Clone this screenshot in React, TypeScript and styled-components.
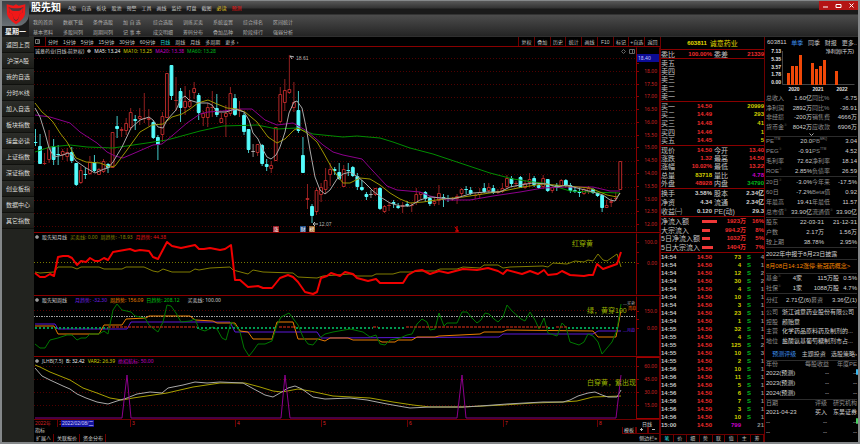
import React from 'react';
import styled, { createGlobalStyle } from 'styled-components';

const RED = '#f02c2c';
const LINE = '#6e0000';
const CYAN = '#54fcfc';
const YELLOW = '#d0cc00';
const MAGENTA = '#c800c8';
const GREEN = '#00b81c';
const TEXT = '#d0d0d0';

const Global = createGlobalStyle`
  * { box-sizing: border-box; }
  body { margin: 0; background: #000; }
  body, button, table {
    font-family: "Liberation Sans", "Noto Sans CJK SC", sans-serif;
    color: ${TEXT};
  }
  button { appearance: none; border: 0; margin: 0; padding: 0; background: none; cursor: pointer; white-space: nowrap; }
`;

/* ---------- window frame ---------- */

const Window = styled.div`
  min-height: 100vh;
  display: flex;
  flex-direction: column;
  background: #000;
  border: solid #85888a;
  border-width: 1px 2px 2px;
  font-size: 5px;
  line-height: 7px;
`;

const Header = styled.header`
  display: grid;
  grid-template-columns: 27px minmax(0, 1fr);
  height: 36px;
  background: linear-gradient(#585858 0, #333 7px, #1a1a1a 8px, #1a1a1a 13px, #4c4c4c 14px, #242424 35px, #3a3a3a 36px);
`;

const Brand = styled.div`
  display: flex;
  flex-direction: column;
  align-items: center;
  justify-content: space-between;
  background: #1c1c1c;
`;

const Emblem = styled.div`
  width: 100%;
  height: 25px;
  display: grid;
  place-items: center;
  border-bottom-right-radius: 12px;
  background: linear-gradient(#3c4044, #6a7075);
`;

const Weekday = styled.strong`
  font-size: 7px;
  line-height: 10px;
  color: #f0f0f0;
`;

const HeaderMain = styled.div`
  display: flex;
  flex-direction: column;
  min-width: 0;
`;

const TitleBar = styled.div`
  display: flex;
  align-items: center;
  height: 13px;
`;

const AppName = styled.h1`
  margin: 0 7px 0 2px;
  font-size: 10px;
  line-height: 12px;
  color: #fff;
`;

const TopMenu = styled.nav`
  display: flex;
  flex: 1;
  gap: 5px;
`;

const MenuButton = styled.button<{ $color?: string }>`
  font-size: 5px;
  line-height: 8px;
  color: ${p => p.$color ?? '#c8c8c8'};
`;

const WindowButtons = styled.div`
  display: flex;
  align-self: flex-start;
  background: #b41414;
`;

const WindowButton = styled.button`
  width: 13px;
  height: 9px;
  display: grid;
  place-items: center;
`;

const CommandGrid = styled.nav`
  display: grid;
  grid-template-columns: repeat(9, 30px);
  padding: 3px 0 0 4px;
  button { text-align: left; line-height: 10px; color: #b0b0b0; }
`;

const Body = styled.div`
  flex: 1;
  display: grid;
  grid-template-columns: 32px minmax(0, 1fr) 105px 93px;
`;

const Sidebar = styled.nav`
  display: flex;
  flex-direction: column;
  background: #22231f;
`;

const SideButton = styled.button`
  height: 16px;
  font-size: 6px;
  color: #dcdcd8;
  background: linear-gradient(#2c2d29, #1c1d19);
  border-bottom: 1px solid #10110e;
`;

/* ---------- chart area ---------- */

const Center = styled.main`
  display: grid;
  grid-template-rows: 9px minmax(0, 186fr) minmax(0, 63fr) minmax(0, 61fr) minmax(0, 63fr) 8px 7px 8px;
  min-width: 0;
`;

const Toolbar = styled.div`
  display: flex;
  justify-content: space-between;
`;

const PeriodGroup = styled.div`
  display: flex;
  align-items: center;
  gap: 5px;
  padding-left: 1px;
`;

const Divider = styled.i`
  width: 1px;
  height: 9px;
  margin-right: -3px;
  background: ${LINE};
`;

const PeriodButton = styled.button<{ $active?: boolean }>`
  font-size: 5px;
  line-height: 8px;
  color: ${p => (p.$active ? '#28d8d8' : '#c4c4c4')};
`;

const ToolGroup = styled.div`
  display: grid;
  grid-template-columns: repeat(9, 1fr);
  width: 142px;
`;

const ToolButton = styled.button`
  border-left: 1px solid ${LINE};
  font-size: 5px;
  line-height: 8px;
  color: #c4c4c4;
`;

const Panel = styled.section`
  display: grid;
  grid-template-columns: minmax(0, 1fr) 24px;
  border-top: 1px solid #8a0000;
  min-height: 0;
`;

const Plot = styled.div`
  position: relative;
  overflow: hidden;
`;

const Canvas = styled.svg`
  position: absolute;
  inset: 0;
  width: 100%;
  height: 100%;
  * { vector-effect: non-scaling-stroke; }
`;

const Legend = styled.div`
  position: relative;
  display: flex;
  align-items: center;
  gap: 3px;
  padding-left: 1px;
  height: 8px;
  font-family: "Noto Sans", "Noto Sans CJK SC", sans-serif;
  white-space: nowrap;
`;

const Value = styled.span<{ $color?: string; $lead?: boolean }>`
  color: ${p => p.$color ?? TEXT};
  margin-left: ${p => (p.$lead ? 5 : 0)}px;
`;

const LegendTools = styled.div`
  display: flex;
  gap: 3px;
  margin-left: auto;
  padding-right: 1px;
`;

const Dot = styled.i`
  width: 4px;
  height: 4px;
  border-radius: 50%;
  background: #aaa;
  border: 1px solid #777;
`;

const Note = styled.span<{ $x: number; $y: number; $color?: string; $size?: number }>`
  position: absolute;
  left: ${p => p.$x}%;
  top: ${p => p.$y}%;
  color: ${p => p.$color ?? '#b4b4b4'};
  font-size: ${p => p.$size ?? 5}px;
  line-height: ${p => (p.$size === 4 ? 4 : 8)}px;
  white-space: nowrap;
`;

const Badge = styled.span<{ $x: number; $bg: string }>`
  position: absolute;
  left: ${p => p.$x}%;
  bottom: 0;
  width: 6px;
  height: 6px;
  background: ${p => p.$bg};
  color: #fff;
  font-size: 5px;
  line-height: 6px;
  text-align: center;
`;

const Axis = styled.div<{ $top: number; $boxed?: boolean }>`
  display: flex;
  flex-direction: column;
  padding-top: ${p => p.$top}px;
  border: 1px solid ${p => (p.$boxed ? '#a00000' : 'transparent')};
  border-left-color: #8a0000;
  border-right-color: ${LINE};
  font-family: "Noto Sans", sans-serif;
  color: #d02424;
`;

const AxisRow = styled.div<{ $height?: number }>`
  flex: ${p => (p.$height ? `0 0 ${p.$height}px` : '1 1 0')};
  display: flex;
  align-items: center;
  justify-content: space-between;
  padding-right: 2px;
  &::before { content: ''; width: 2px; height: 1px; background: #8a0000; }
`;

const Cursor = styled.div`
  height: 8px;
  padding-left: 1px;
  font-family: "Noto Sans", sans-serif;
  line-height: 8px;
  color: #c8c8ff;
  background: #0c0c96;
`;

const TimeRow = styled.div`
  display: grid;
  grid-template-columns: minmax(0, 1fr) 24px;
  border-top: 1px solid ${LINE};
`;

const TimeTrack = styled.div`
  position: relative;
  padding-left: 1px;
`;

const Month = styled.span<{ $x: number }>`
  position: absolute;
  left: ${p => p.$x}%;
  padding-left: 1px;
  border-left: 1px solid ${LINE};
  line-height: 7px;
  color: #d82424;
`;

const DateTag = styled(Month)`
  border: 0;
  padding: 0 1px;
  color: #d0d0ff;
  background: #1414a0;
`;

const Cell = styled.button<{ $boxed?: boolean; $width?: number }>`
  font-size: 5px;
  line-height: 6px;
  color: ${TEXT};
  padding: 0 2px 0 1px;
  width: ${p => (p.$width ? `${p.$width}px` : 'auto')};
  border-right: 1px solid ${LINE};
  border-left: ${p => (p.$boxed ? `1px solid ${LINE}` : '0')};
  border-bottom: ${p => (p.$boxed ? `1px solid ${LINE}` : '0')};
`;

const Strip = styled.div`
  display: flex;
  gap: 2px;
  padding-left: 1px;
`;

const Push = styled.div`
  display: flex;
  margin-left: auto;
`;

/* ---------- quote panel ---------- */

const Quote = styled.aside`
  display: flex;
  flex-direction: column;
  border-left: 1px solid ${LINE};
  border-right: 1px solid ${LINE};
`;

const StockTitle = styled.h2`
  display: flex;
  justify-content: center;
  align-items: center;
  gap: 3px;
  margin: 0;
  height: 12px;
  font-size: 7px;
  font-weight: normal;
  color: #e0dc00;
  b { font-size: 6px; }
`;

const QuoteTable = styled.table<{ $height: number }>`
  width: 100%;
  height: ${p => p.$height}px;
  table-layout: fixed;
  border-collapse: separate;
  border-spacing: 0;
  border-top: 1px solid #8a0000;
  font-size: 6px;
  line-height: 7px;
  white-space: nowrap;
  td, th { padding: 0; vertical-align: middle; }
`;

const Label = styled.th<{ $size?: number }>`
  text-align: left;
  font-weight: normal;
  font-size: ${p => p.$size ?? 7}px;
  color: #c4c4c4;
`;

const Num = styled.td<{ $color?: string }>`
  text-align: right;
  font-weight: bold;
  color: ${p => p.$color ?? TEXT};
`;

const Flow = styled.div<{ $width: number }>`
  width: ${p => p.$width}px;
  height: 3px;
  background: #f03838;
`;

const QuoteTabs = styled.div`
  display: grid;
  grid-template-columns: repeat(8, 1fr);
  margin-top: auto;
  height: 8px;
  border-top: 1px solid ${LINE};
`;

const QuoteTab = styled.button<{ $active?: boolean }>`
  font-size: 5px;
  line-height: 7px;
  border-right: 1px solid ${LINE};
  color: ${p => (p.$active ? '#28d8d8' : '#c4c4c4')};
`;

/* ---------- company panel ---------- */

const Info = styled.aside`
  position: relative;
  display: flex;
  flex-direction: column;
  min-width: 0;
  overflow: hidden;
  padding: 0 1px;
  font-size: 6px;
`;

const InfoTabs = styled.div<{ $height: number }>`
  display: flex;
  align-items: center;
  justify-content: space-between;
  height: ${p => p.$height}px;
  padding-left: 1px;
  white-space: nowrap;
`;

const InfoTab = styled.button<{ $active?: boolean }>`
  font-size: 6px;
  color: ${p => (p.$active ? '#3c8ce8' : '#c0c0c0')};
`;

const Profit = styled.figure`
  display: grid;
  grid-template-columns: 16px minmax(0, 1fr);
  grid-template-rows: 38px 8px;
  margin: 0;
  font-size: 5px;
  font-weight: bold;
  color: #e0e0e0;
`;

const ProfitScale = styled.div`
  display: flex;
  flex-direction: column;
  justify-content: space-between;
  text-align: right;
  padding-right: 1px;
`;

const ProfitPlot = styled.div`
  position: relative;
`;

const ProfitTitle = styled.figcaption`
  position: absolute;
  top: 0;
  right: 3px;
  font-weight: normal;
`;

const Years = styled.div`
  grid-column: 2;
  display: grid;
  grid-template-columns: repeat(3, 24px);
  text-align: center;
`;

const InfoTable = styled.table<{ $height: number; $line?: boolean }>`
  width: 100%;
  height: ${p => p.$height}px;
  table-layout: fixed;
  border-collapse: separate;
  border-spacing: 0;
  border-top: ${p => (p.$line === false ? '0' : '1px solid #2c2c2c')};
  font-size: 6px;
  line-height: 7px;
  white-space: nowrap;
  td, th { padding: 0; vertical-align: middle; }
`;

const Dim = styled.th<{ $right?: boolean }>`
  font-weight: normal;
  text-align: ${p => (p.$right ? 'right' : 'left')};
  color: #8c8c8c;
  sup { font-size: 3px; line-height: 3px; }
`;

const Fact = styled.td<{ $left?: boolean }>`
  text-align: ${p => (p.$left ? 'left' : 'right')};
  color: #d0d0d0;
`;

const Expand = styled.button`
  height: 4px;
  display: grid;
  place-items: center;
`;

const News = styled.a<{ $alert?: boolean; $height: number }>`
  display: block;
  height: ${p => p.$height}px;
  border-top: 1px solid #2c2c2c;
  line-height: 12px;
  white-space: nowrap;
  text-decoration: none;
  color: ${p => (p.$alert ? '#f88800' : '#d0d0d0')};
`;

const ScrollMark = styled.i<{ $top: number; $color: string }>`
  position: absolute;
  right: 0;
  top: ${p => p.$top}%;
  width: 2px;
  height: 6px;
  border-radius: 1px;
  background: ${p => p.$color};
`;

/* ---------- data ---------- */

type Kind = 'u' | 'd' | 'f';
type Candle = [number, number, number, number, Kind];

// high, body top, body bottom, low (plot units), direction
const candles: Candle[] = [
  [129, 142, 143, 146, 'd'], [134, 146, 164, 164, 'd'], [153, 163, 164, 165, 'u'], [130, 147, 160, 163, 'u'],
  [139, 146, 160, 165, 'd'], [145, 154, 155, 165, 'd'], [149, 151, 155, 160, 'u'], [148, 152, 157, 161, 'u'],
  [147, 152, 161, 163, 'd'], [163, 163, 185, 186, 'd'], [166, 170, 183, 184, 'u'], [168, 174, 175, 179, 'd'],
  [156, 162, 174, 175, 'u'], [155, 162, 171, 172, 'd'], [168, 169, 175, 175, 'u'], [159, 161, 172, 173, 'u'],
  [163, 164, 168, 173, 'd'], [132, 132, 168, 168, 'u'], [116, 126, 129, 138, 'd'], [127, 129, 131, 137, 'u'],
  [118, 123, 131, 135, 'u'], [108, 112, 128, 130, 'u'], [115, 119, 121, 130, 'd'], [108, 116, 119, 125, 'u'],
  [93, 118, 119, 123, 'u'], [109, 118, 120, 126, 'u'], [120, 122, 138, 139, 'd'], [135, 137, 145, 160, 'd'],
  [112, 116, 135, 142, 'u'], [73, 73, 118, 118, 'u'], [65, 65, 96, 100, 'd'], [77, 100, 101, 111, 'u'],
  [88, 91, 108, 122, 'd'], [86, 101, 108, 115, 'u'], [90, 101, 107, 108, 'u'], [82, 88, 93, 99, 'u'],
  [93, 95, 113, 120, 'd'], [111, 113, 118, 126, 'u'], [103, 107, 118, 127, 'u'], [91, 107, 108, 117, 'u'],
  [94, 108, 115, 117, 'd'], [113, 118, 123, 123, 'u'], [105, 113, 117, 137, 'u'], [87, 93, 114, 116, 'u'],
  [94, 98, 115, 116, 'd'], [101, 109, 111, 117, 'u'], [113, 115, 132, 135, 'd'], [129, 129, 150, 153, 'd'],
  [144, 151, 152, 157, 'f'], [144, 144, 153, 156, 'u'], [144, 145, 164, 166, 'd'], [159, 164, 167, 171, 'd'],
  [161, 165, 169, 173, 'u'], [127, 127, 161, 161, 'u'], [87, 94, 122, 123, 'u'], [79, 90, 103, 111, 'u'],
  [55, 89, 93, 94, 'u'], [82, 102, 108, 112, 'u'], [91, 110, 131, 133, 'd'], [137, 155, 173, 173, 'd'],
  [184, 198, 200, 209, 'u'], [204, 206, 216, 223, 'd'], [188, 190, 212, 215, 'u'], [183, 187, 195, 202, 'u'],
  [168, 180, 190, 194, 'u'], [163, 169, 175, 186, 'u'], [167, 169, 171, 175, 'd'], [163, 172, 179, 180, 'd'],
  [165, 169, 187, 187, 'u'], [163, 170, 171, 176, 'd'], [166, 167, 176, 177, 'd'], [173, 176, 187, 190, 'd'],
  [180, 187, 190, 191, 'd'], [192, 194, 197, 200, 'd'], [190, 194, 195, 198, 'f'], [188, 188, 195, 196, 'u'],
  [187, 188, 209, 210, 'd'], [205, 206, 212, 213, 'u'], [202, 205, 206, 211, 'u'], [200, 202, 204, 208, 'd'],
  [203, 206, 208, 209, 'd'], [202, 205, 207, 213, 'u'], [201, 204, 206, 207, 'd'], [203, 205, 206, 212, 'u'],
  [188, 194, 203, 205, 'u'], [192, 192, 195, 199, 'u'], [191, 192, 199, 202, 'd'], [197, 198, 204, 206, 'd'],
  [197, 201, 204, 206, 'u'], [185, 193, 201, 205, 'u'], [194, 197, 200, 207, 'd'], [195, 198, 199, 202, 'd'],
  [197, 198, 199, 201, 'u'], [194, 196, 199, 204, 'u'], [188, 189, 194, 197, 'u'], [186, 189, 190, 194, 'd'],
  [187, 190, 194, 195, 'd'], [193, 195, 196, 199, 'u'], [188, 192, 195, 198, 'u'], [183, 188, 192, 193, 'd'],
  [183, 187, 191, 193, 'u'], [185, 188, 193, 194, 'd'], [189, 191, 193, 194, 'u'], [183, 188, 192, 193, 'u'],
  [175, 178, 187, 189, 'u'], [176, 178, 184, 187, 'd'], [181, 183, 184, 187, 'u'], [176, 177, 188, 188, 'd'],
  [180, 183, 188, 189, 'u'], [173, 179, 183, 187, 'u'], [176, 178, 185, 187, 'd'], [183, 185, 188, 189, 'd'],
  [175, 178, 187, 189, 'u'], [179, 179, 191, 192, 'd'], [185, 187, 191, 193, 'u'], [183, 185, 188, 191, 'd'],
  [179, 180, 186, 187, 'u'], [179, 180, 186, 187, 'd'], [183, 185, 191, 193, 'd'], [187, 190, 192, 193, 'd'],
  [187, 192, 193, 197, 'd'], [187, 189, 194, 195, 'u'], [186, 188, 192, 194, 'u'], [188, 189, 193, 194, 'd'],
  [192, 193, 196, 197, 'd'], [195, 195, 208, 212, 'd'], [200, 205, 208, 208, 'u'], [198, 201, 203, 207, 'u'],
  [192, 198, 199, 201, 'u'], [161, 161, 190, 190, 'u'],
];

const ma5 = '35,108 40,117 45,133 49,148 54,157 63,155 68,153 72,155 76,161 86,168 95,173 104,169 108,168 113,162 122,147 131,128 140,120 149,117 153,120 158,127 163,128 167,120 176,110 181,99 185,96 189,100 199,103 208,103 212,105 217,112 226,112 235,109 244,112 249,120 253,133 258,139 262,148 267,157 271,159 276,155 280,147 285,132 289,113 294,102 297,101 302,108 306,127 310,150 315,177 320,190 325,194 330,190 337,179 343,174 350,172 358,177 365,183 373,191 382,198 390,203 400,206 410,206 420,200 430,197 443,198 453,199 463,196 473,193 487,192 500,192 510,187 520,185 533,183 547,184 557,187 567,185 577,188 593,192 603,195 610,200 615,201 620,193';
const ma10 = '35,103 42,112 48,117 53,122 60,133 67,142 76,158 86,162 100,163 110,167 115,166 127,150 140,132 152,125 163,124 172,117 182,114 190,109 198,103 208,100 217,104 227,108 237,109 245,112 257,122 268,137 277,143 285,139 294,130 298,128 307,133 317,142 323,152 333,170 343,183 350,183 360,178 370,179 380,185 390,193 400,199 410,203 423,202 443,199 463,197 483,194 503,191 523,187 543,184 567,186 590,188 607,195 617,197 620,193';
const ma20 = '35,115 50,117 70,123 80,132 97,143 107,152 115,156 123,158 137,152 153,145 162,144 173,135 187,123 200,114 208,112 223,111 240,109 252,109 265,120 277,125 293,123 307,131 323,145 333,152 343,155 362,159 372,170 387,186 397,190 420,192 430,196 447,200 470,200 493,196 520,192 543,188 567,187 593,187 610,191 620,191';
const ma60 = '35,152 50,147 70,145 87,147 113,148 140,144 167,140 200,131 223,126 257,125 277,129 297,128 313,134 343,137 357,136 380,138 393,142 410,148 433,154 460,163 490,173 513,179 533,182 543,183 557,187 570,191 590,192 620,193';

const monthRed = '35,273 40,277 45,277 50,274 54,276 58,257 63,256 68,256 72,258 77,265 81,261 86,262 90,258 95,261 99,261 104,258 108,260 113,252 130,249 135,251 140,250 149,251 153,257 158,259 167,242 172,246 181,248 195,245 199,249 204,249 210,248 220,250 225,249 231,245 235,280 240,280 248,287 258,286 263,288 272,288 280,278 288,275 293,277 298,282 305,292 313,294 317,292 321,278 327,276 331,273 340,276 345,272 353,274 357,278 368,281 376,279 380,283 403,283 408,275 415,271 422,270 430,274 439,271 448,273 463,269 477,270 488,268 498,271 503,274 507,270 522,274 530,271 538,274 544,270 548,275 557,274 562,271 570,275 584,276 589,275 593,275 597,264 603,269 617,264 621,252';
const monthOlive = '35,272 40,273 54,272 58,267 72,267 77,269 81,267 99,267 104,269 122,269 126,267 144,267 153,271 158,272 163,269 172,272 190,272 195,269 199,270 210,268 230,267 233,270 248,274 253,270 263,272 293,273 298,277 317,278 323,276 350,274 357,276 372,276 376,274 393,274 400,272 410,272 422,271 435,271 440,269 457,269 463,267 480,268 484,265 498,265 503,268 510,267 543,266 548,267 553,263 567,264 575,261 584,262 588,260 593,261 598,254 603,260 607,261 617,254 621,267';

const weekPurple = '35,324 55,324 58,329 127,329 131,322 230,322 235,332 317,332 321,338 499,337 503,334 593,334 598,331 621,331';
const weekOrange = '35,326 54,326 58,334 99,334 104,325 122,325 126,319 146,318 149,316 190,316 195,320 213,321 217,323 235,323 240,331 248,332 253,339 272,339 277,322 293,322 298,339 318,339 325,341 330,338 348,338 353,340 378,340 382,342 395,342 398,340 412,340 417,337 435,337 439,336 460,335 480,334 484,332 502,332 507,330 593,331 598,337 616,337 621,310';
const weekGreen = '35,344 40,348 45,348 50,340 58,338 67,335 72,335 77,340 81,338 86,338 90,334 99,334 104,331 108,334 113,310 117,304 122,310 131,312 135,316 145,318 149,325 158,332 163,322 167,305 171,306 176,313 181,322 190,321 195,319 199,329 205,331 213,327 217,329 222,338 226,340 231,322 235,325 240,332 244,348 249,356 253,351 258,344 265,344 272,341 277,325 281,317 289,313 298,325 303,337 308,344 313,345 317,340 325,334 333,332 350,329 363,332 370,337 376,335 380,344 385,345 390,340 400,338 407,335 412,334 417,324 422,319 427,322 430,330 435,329 439,313 444,326 447,323 457,323 462,312 467,312 472,318 477,323 481,320 485,313 489,314 494,319 498,322 503,317 507,305 512,311 521,319 525,321 530,312 535,320 539,329 544,318 548,333 557,336 562,323 566,327 570,342 579,345 584,342 588,334 593,336 598,342 602,354 607,348 612,342 617,330 621,304';
const weekSignals: [number, number, 'g' | 'r'][] = [
  [35, 108, 'g'], [108, 197, 'r'], [197, 277, 'g'], [279, 296, 'r'], [296, 373, 'g'], [373, 378, 'r'],
  [378, 405, 'g'], [406, 548, 'r'], [548, 556, 'g'], [556, 568, 'r'], [568, 620, 'g'],
];

const jlWhite = '35,368 42,376 50,380 63,386 70,389 77,394 86,398 97,402 108,404 117,401 127,398 137,394 150,392 162,393 168,388 183,385 195,382 207,383 220,382 243,383 252,388 265,395 273,397 280,393 288,388 295,386 302,389 313,397 325,399 350,398 367,400 387,404 410,408 430,407 463,407 480,406 507,404 543,402 563,402 570,400 578,396 588,393 595,392 602,395 608,397 617,397 621,390';
const jlYellow = '35,365 40,367 50,372 70,380 83,388 97,393 110,398 122,400 133,398 167,393 193,387 220,383 245,383 260,387 273,391 282,392 298,389 310,391 333,396 370,398 393,402 413,405 430,407 463,407 503,405 533,403 563,402 577,401 593,397 621,396';
const jlSpikes = '35,418 122,418 127,375 131,418 281,418 285,375 290,418 457,418 462,375 466,418 616,418 621,375';

const months: [string, number][] = [['3', 130], ['4', 235], ['5', 321], ['6', 407], ['7', 503], ['8', 597]];
const prices = ['18.00', '17.50', '17.00', '16.50', '16.00', '15.50', '15.00', '14.50', '14.00', '13.50', '13.00', '12.50', '12.00'];

const topMenu = ['A股', '自选', '板块', '股池', '预警', '工具', '画线', '监控', '盯盘', '截图', '必读', '预测'];
const commands = [
  '我的首页', '数据下载', '条件选股', '加 自 选', '综合选股', '训练买卖', '系统设置', '综合排名', '区间统计',
  '基本资料', '多股同列', '周期同列', '记 事 本', '成交明细', '筹码分布', '叠加品种', '阶段排行', '强弱分析',
];
const side = ['返回上页', '沪深A股', '我的自选', '分时/K线', '加入自选', '板块指数', '操盘必读', '上证指数', '深证指数', '创业板指', '数据中心', '其它指数'];
const periods = ['分时', '1分钟', '5分钟', '15分钟', '30分钟', '60分钟', '日线', '周线', '月线', '多周期', '更多 ›'];
const tools = ['复权', '叠加', '历史', '统计', '画线', 'F10', '标记', '+自选', '返回'];

type Pair = [string, string, string, string, string, string];
const buys: [string, string, string][] = [
  ['买一', '14.50', '20999'], ['买二', '14.49', '293'], ['买三', '14.48', '41'], ['买四', '14.46', '1'], ['买五', '14.45', '5'],
];
const priceRows: Pair[] = [
  ['现价', '14.50', RED, '今开', '13.40', RED], ['涨跌', '1.32', RED, '最高', '14.50', RED],
  ['涨幅', '10.02%', RED, '最低', '13.22', RED], ['总量', '83718', YELLOW, '量比', '4.78', MAGENTA],
  ['外盘', '48928', RED, '内盘', '34790', GREEN],
];
const shareRows: Pair[] = [
  ['换手', '3.58%', TEXT, '股本', '2.34亿', TEXT], ['净资', '4.34', TEXT, '流通', '2.34亿', TEXT],
  ['收益㈠', '0.120', TEXT, 'PE(动)', '29.3', TEXT],
];
const flows: [string, number, string, string][] = [
  ['净流入额', 15, '1923万', '16%'], ['大宗流入', 8, '994.2万', '8%'], ['5日净流入额', 8, '1032万', '5%'], ['5日大宗流入', 11, '1404万', '7%'],
];
const ticks: [string, string, string][] = [
  ['14:54', '73', '4'], ['14:54', '4', '1'], ['14:54', '12', '2'], ['14:54', '30', '2'], ['14:54', '4', '1'],
  ['14:54', '10', '1'], ['14:54', '3', '1'], ['14:54', '23', '1'], ['14:54', '1', '1'], ['14:55', '32', '1'],
  ['14:55', '4', '1'], ['14:55', '125', '2'], ['14:55', '10', '3'], ['14:55', '2', '1'], ['14:56', '10', '1'],
  ['14:56', '11', '1'], ['14:56', '5', '1'], ['14:56', '6', '1'], ['14:56', '7', '1'], ['14:56', '3', '1'],
  ['14:56', '10', '1'], ['15:00', '799', '21'],
];

type Stat = [string, string, string, string, string, string];
const statGroups: { height: number; rows: Stat[] }[] = [
  { height: 40, rows: [
    ['PE', 'TTM', '20.0', 'PB', 'MRQ', '3.04'], ['PEG', '①', '-0.91', 'PS', 'TTM', '4.52'],
    ['毛利率', '', '72.62', '净利率', '', '18.14'], ['ROE', '①', '2.85%', '负债率', '', '26.59'],
  ] },
  { height: 41, rows: [
    ['20日', '①', '-3.0%', '今年来', '', '-17.5%'], ['60日', '', '-7.2%', 'Beta值', '', '0.92'],
    ['年最高', '', '19.41', '年最低', '', '11.57'], ['总市值', '①', '33.90亿', '流通值', '①', '33.90亿'],
  ] },
];
const incomeRows: Stat[] = [
  ['总收入', '', '1.60亿', '同比%', '', '-6.75'], ['净利润', '', '2892万', '同比%', '', '-36.91'],
  ['非经损', '', '-200万', '销售费', '', '4666万'], ['货币金', '①', '8042万', '应收款', '', '6906万'],
];
const holders = [['股东', '22-03-31', '21-12-31'], ['户数', '2.17万', '1.56万'], ['较上期', '38.78%', '2.95%']];
const company = [['公司', '浙江诚意药业股份有限公司'], ['控股', '颜贻意'], ['主营', '化学药品原料药及制剂的...'], ['地位', '盐酸氨基葡萄糖制剂市占...']];
const profitBars: [number, number][] = [[5, 12], [9, 19], [13, 19], [17, 30], [29, 22], [33, 16], [37, 19], [41, 25], [53, 14]];

/* ---------- pieces ---------- */

const Bull = () => (
  <svg width="20" height="22" viewBox="0 0 60 66">
    <path d="M2 4 L22 8 L30 4 L38 8 L58 4 L57 34 Q53 50 30 64 Q7 50 3 34Z" fill="#f01818" />
    <path d="M8 11 Q14 16 30 16 Q46 16 52 11 L50 28 L41 32 L36 50 L30 55 L24 50 L19 32 L10 28Z" fill="#50383c" />
    <path d="M11 13 Q13 24 24 24 L36 24 Q47 24 49 13 Q54 30 42 32 L36 47 L30 52 L24 47 L18 32 Q6 30 11 13Z" fill="#f01818" />
  </svg>
);

const pct = (value: number, start: number, size: number) => ((value - start) / size) * 100;
const px = (x: number) => pct(x, 34, 602);

const Line = ({ points, color, width = 1 }: { points: string; color: string; width?: number }) => (
  <polyline points={points} fill="none" stroke={color} strokeWidth={width} strokeLinejoin="round" />
);

const Rule = ({ y, color = '#500000', dash = '1 2' }: { y: number; color?: string; dash?: string }) => (
  <line x1="34" x2="636" y1={y} y2={y} stroke={color} strokeDasharray={dash} />
);

const candleColor: Record<Kind, string> = { u: '#b42828', d: CYAN, f: '#aaa' };

const Candles = () => (
  <g>
    {candles.map(([high, top, bottom, low, kind], i) => {
      const x = 35.5 + i * 4.533;
      const color = candleColor[kind];
      const flat = bottom - top < 2;
      return (
        <g key={i} stroke={color}>
          <line x1={x} x2={x} y1={high} y2={top} opacity="0.8" />
          <line x1={x} x2={x} y1={bottom} y2={low} opacity="0.8" />
          {flat
            ? <line x1={x - 1.8} x2={x + 1.8} y1={top + 0.5} y2={top + 0.5} />
            : <rect x={x - 1.4} y={top + 0.5} width="2.8" height={bottom - top - 1} fill={kind === 'u' ? '#000' : color} />}
        </g>
      );
    })}
  </g>
);

const PairRows = ({ rows }: { rows: Pair[] }) => (
  <tbody>
    {rows.map(([a, b, bc, c, d, dc]) => (
      <tr key={a}><Label>{a}</Label><Num $color={bc}>{b}</Num><Label>&nbsp;{c}</Label><Num $color={dc}>{d}</Num></tr>
    ))}
  </tbody>
);

const PairCols = () => <colgroup><col width="26" /><col width="25" /><col width="23" /><col /></colgroup>;

const StatTable = ({ rows, height, line }: { rows: Stat[]; height: number; line?: boolean }) => (
  <InfoTable $height={height} $line={line}>
    <colgroup><col width="21" /><col width="25" /><col width="21" /><col /></colgroup>
    <tbody>
      {rows.map(([a, as, b, c, cs, d], i) => (
        <tr key={i}>
          <Dim>{a}{as && <sup>{as}</sup>}</Dim><Fact>{b}</Fact><Dim>{c}{cs && <sup>{cs}</sup>}</Dim><Fact>{d}</Fact>
        </tr>
      ))}
    </tbody>
  </InfoTable>
);

const PlusMinus = ({ plus }: { plus?: boolean }) => (
  <svg width="5" height="5" viewBox="0 0 5 5" stroke="#bbb">
    <path d={plus ? 'M1 2.5h3M2.5 1v3' : 'M1 2.5h3'} />
  </svg>
);

/* ---------- page ---------- */

export default function App() {
  return (
    <>
      <Global />
      <Window>
        <Header>
          <Brand>
            <Emblem><Bull /></Emblem>
            <Weekday>星期一</Weekday>
          </Brand>
          <HeaderMain>
            <TitleBar>
              <AppName>股先知</AppName>
              <TopMenu>
                {topMenu.map(t => (
                  <MenuButton key={t} $color={t === '必读' ? '#f0d020' : t === '预测' ? '#f01010' : undefined}>{t}</MenuButton>
                ))}
              </TopMenu>
              <WindowButtons>
                {['M4 6h5', 'M4 3.5h5v3h-5z', 'M4.5 2.5l4 4M8.5 2.5l-4 4'].map((d, i) => (
                  <WindowButton key={d} aria-label={['最小化', '最大化', '关闭'][i]}>
                    <svg width="13" height="9" viewBox="0 0 13 9" fill="none" stroke="#fff"><path d={d} /></svg>
                  </WindowButton>
                ))}
              </WindowButtons>
            </TitleBar>
            <CommandGrid>
              {commands.map(c => <MenuButton key={c}>{c}</MenuButton>)}
            </CommandGrid>
          </HeaderMain>
        </Header>

        <Body>
          <Sidebar>{side.map(s => <SideButton key={s}>{s}</SideButton>)}</Sidebar>

          <Center>
            <Toolbar>
              <PeriodGroup>
                <svg width="5" height="5" viewBox="0 0 5 5" fill="none" stroke="#777"><path d="M.5 .5h4v4h-4zM3 .5v4" /></svg>
                <Divider />
                {periods.map(p => <PeriodButton key={p} $active={p === '日线'}>{p}</PeriodButton>)}
              </PeriodGroup>
              <ToolGroup>{tools.map(t => <ToolButton key={t}>{t}</ToolButton>)}</ToolGroup>
            </Toolbar>

            <Panel>
              <Plot>
                <Canvas viewBox="34 47 602 185" preserveAspectRatio="none">
                  {[58.5, ...prices.map((_, i) => 71.5 + i * 12.9)].map(y => <Rule key={y} y={Math.floor(y) + 0.5} />)}
                  <Candles />
                  <Line points={ma60} color="#008c00" />
                  <Line points={ma20} color="#8c008c" />
                  <Line points={ma10} color="#9c9400" />
                  <Line points={ma5} color="#a8a8a8" />
                  <path d="M290 56l4 1M290 56l2 3M313 224h5M313 224l2-2M313 224l2 2" stroke="#bbb" fill="none" />
                  <path d="M455 227l3 4M457 226v6M455 231h4" stroke="#e00000" fill="none" />
                </Canvas>
                <Legend>
                  <Value>诚意药业(日线.前复权)</Value><Dot />
                  <Value $color="#f0f0f0">MA5: 13.24</Value>
                  <Value $color={YELLOW}>MA10: 13.25</Value>
                  <Value $color={MAGENTA}>MA20: 13.38</Value>
                  <Value $color={GREEN}>MA60: 13.28</Value>
                  <LegendTools>
                    <svg width="5" height="5" viewBox="0 0 5 5" fill="none" stroke="#666"><path d="M2.5 .5l2 2-2 2-2-2z" /></svg>
                    <svg width="6" height="5" viewBox="0 0 6 5" fill="none" stroke="#666"><path d="M.5 .5h5v4h-5zM3.5 .5v4" /></svg>
                  </LegendTools>
                </Legend>
                <Note $x={px(296)} $y={pct(54, 47, 185)}>18.61</Note>
                <Note $x={px(319)} $y={pct(220, 47, 185)}>12.07</Note>
                <Badge $x={px(273)} $bg="#a01c24">涨</Badge>
                <Badge $x={px(300)} $bg="#245088">财</Badge>
                <Badge $x={px(309)} $bg="#a06428">榜</Badge>
              </Plot>
              <Axis $top={6}>
                <Cursor>18.40</Cursor>
                <AxisRow $height={3} />
                {prices.map(p => <AxisRow key={p}>{p}</AxisRow>)}
              </Axis>
            </Panel>

            <Panel>
              <Plot>
                <Canvas viewBox="34 233 602 62" preserveAspectRatio="none">
                  <Rule y={262.5} color="#787800" />
                  <Line points={monthOlive} color="#807c00" />
                  <Line points={monthRed} color="#f00000" width={2} />
                </Canvas>
                <Legend>
                  <Dot /><Value>股先知月线</Value>
                  <Value $color="#8c8800">买卖线: 0.00</Value>
                  <Value $color="#8c8800">周趋势: -18.93</Value>
                  <Value $color="#e01414">月趋势: 44.38</Value>
                </Legend>
                <Note $x={px(572)} $y={pct(240, 233, 62)} $color="#9cb400" $size={7}>红穿黄</Note>
              </Plot>
              <Axis $top={3}>
                <AxisRow $height={10}>100.0</AxisRow>
                <AxisRow $height={11} />
                <AxisRow $height={10}>0.00</AxisRow>
              </Axis>
            </Panel>

            <Panel>
              <Plot>
                <Canvas viewBox="34 296 602 60" preserveAspectRatio="none">
                  <Rule y={310.5} />
                  <Rule y={316.5} color="#a0a0a0" dash="1 1 2 1" />
                  <Line points={weekPurple} color="#5c18d8" />
                  <Line points={weekOrange} color="#e87c00" />
                  <Line points={weekGreen} color="#007800" />
                  {weekSignals.map(([a, b, c]) => (
                    <line key={a} x1={a} x2={b} y1={c === 'g' ? 328 : 327} y2={c === 'g' ? 328 : 327}
                      stroke={c === 'g' ? '#009850' : '#e83018'} strokeWidth={c === 'g' ? 2 : 1} strokeDasharray={c === 'g' ? '2 2' : '3 1'} />
                  ))}
                </Canvas>
                <Legend>
                  <Dot /><Value>股先知周线</Value>
                  <Value $lead $color="#7020e8">月趋势: -32.30</Value>
                  <Value $color="#f08400">周趋势: 156.09</Value>
                  <Value $color="#00c814">日趋势: 208.12</Value>
                  <Value $lead>买卖线: 100.00</Value>
                </Legend>
                <Note $x={px(623)} $y={pct(302, 296, 60)} $size={4}>—买卖</Note>
                <Note $x={px(628)} $y={pct(307, 296, 60)} $size={4} $color="#e86000">周趋</Note>
                <Note $x={px(623)} $y={pct(329, 296, 60)} $size={4} $color="#7020e8">—月趋</Note>
                <Note $x={px(587)} $y={pct(307, 296, 60)} $color="#9cb400" $size={7}>绿，黄穿100</Note>
              </Plot>
              <Axis $top={9}>
                <AxisRow $height={10}>150.0</AxisRow>
                <AxisRow $height={7} />
                <AxisRow $height={10}>0.00</AxisRow>
              </Axis>
            </Panel>

            <Panel>
              <Plot>
                <Canvas viewBox="34 357 602 62" preserveAspectRatio="none">
                  {[366.5, 379.5, 392.5, 405.5].map(y => <Rule key={y} y={y} />)}
                  <Line points={jlYellow} color="#a8a000" />
                  <Line points={jlWhite} color="#a8a8a8" />
                  <Line points={jlSpikes} color="#8c008c" />
                </Canvas>
                <Legend>
                  <Dot /><Value>JLHB(7,5)</Value>
                  <Value $color="#f0f0f0">B: 32.42</Value>
                  <Value $color={YELLOW}>VAR2: 26.39</Value>
                  <Value $color={MAGENTA}>绝招航标: 50.00</Value>
                </Legend>
                <Note $x={px(587)} $y={pct(379, 357, 62)} $color="#9cb400" $size={7}>白穿黄，紫出现</Note>
              </Plot>
              <Axis $top={2} $boxed>
                {['60.00', '45.00', '30.00', '15.00'].map(p => <AxisRow key={p} $height={13}>{p}</AxisRow>)}
              </Axis>
            </Panel>

            <TimeRow>
              <TimeTrack>
                <Value $color="#d02020">2022年</Value>
                <Month $x={px(57)}>2</Month>
                <DateTag $x={px(61)}>2022/02/08/二</DateTag>
                {months.map(([m, x]) => <Month key={m} $x={px(x)}>{m}</Month>)}
              </TimeTrack>
              <Cell>日线</Cell>
            </TimeRow>
            <Strip>
              <Value>指标</Value>
              <Push>
                <Cell $boxed $width={14}>模板</Cell>
                <Cell $boxed $width={12} aria-label="放大"><PlusMinus plus /></Cell>
                <Cell $boxed $width={12} aria-label="缩小"><PlusMinus /></Cell>
              </Push>
            </Strip>
            <Strip>
              <Cell>扩展∧</Cell><Cell>关联报价</Cell><Cell>资金分布</Cell>
              <Push><Cell>侧边栏»</Cell></Push>
            </Strip>
          </Center>

          <Quote>
            <StockTitle><b>603811</b> 诚意药业</StockTitle>
            <QuoteTable $height={9}>
              <PairCols />
              <PairRows rows={[['委比', '100.00%', RED, '委差', '21339', RED]]} />
            </QuoteTable>
            <QuoteTable $height={43}>
              <tbody>{['卖五', '卖四', '卖三', '卖二', '卖一'].map(s => <tr key={s}><Label>{s}</Label></tr>)}</tbody>
            </QuoteTable>
            <QuoteTable $height={44}>
              <colgroup><col width="26" /><col width="25" /><col /></colgroup>
              <tbody>
                {buys.map(([a, b, c]) => <tr key={a}><Label>{a}</Label><Num $color={RED}>{b}</Num><Num $color={YELLOW}>{c}</Num></tr>)}
              </tbody>
            </QuoteTable>
            <QuoteTable $height={43}><PairCols /><PairRows rows={priceRows} /></QuoteTable>
            <QuoteTable $height={28}><PairCols /><PairRows rows={shareRows} /></QuoteTable>
            <QuoteTable $height={36}>
              <colgroup><col width="41" /><col width="17" /><col width="27" /><col /></colgroup>
              <tbody>
                {flows.map(([a, w, b, c]) => (
                  <tr key={a}><Label>{a}</Label><td><Flow $width={w} /></td><Num $color={RED}>{b}</Num><Num $color={RED}>{c}</Num></tr>
                ))}
              </tbody>
            </QuoteTable>
            <QuoteTable $height={178}>
              <colgroup><col width="26" /><col width="25" /><col width="29" /><col width="10" /><col /></colgroup>
              <tbody>
                {ticks.map(([t, v, n], i) => (
                  <tr key={i}>
                    <Label as="td" $size={6}><b>{t}</b></Label>
                    <Num $color={RED}>14.50</Num>
                    <Num $color={v === '799' ? MAGENTA : YELLOW}>{v}</Num>
                    <Num $color={GREEN}>{v === '799' ? '' : 'S'}</Num>
                    <Num $color="#909090">{n}</Num>
                  </tr>
                ))}
              </tbody>
            </QuoteTable>
            <QuoteTabs>
              {['笔', '价', '细', '势', '联', '值', '主', '筹'].map((t, i) => <QuoteTab key={t} $active={i === 0}>{t}</QuoteTab>)}
            </QuoteTabs>
          </Quote>

          <Info>
            <InfoTabs $height={11}>
              <span>603811</span>
              <InfoTab $active>单季</InfoTab><InfoTab>同季</InfoTab><InfoTab>财报</InfoTab><InfoTab>更多..</InfoTab>
            </InfoTabs>
            <Profit>
              <ProfitScale>
                {['7.13', '5.35', '3.57', '1.78', '0.00'].map(v => <span key={v}>{v}</span>)}
              </ProfitScale>
              <ProfitPlot>
                <svg width="74" height="38" viewBox="0 0 74 38">
                  <path d="M.5 3v33.500h72" stroke="#444" fill="none" />
                  {profitBars.map(([x, h]) => <rect key={x} x={x} y={37 - h} width="3" height={h} fill="#f04808" />)}
                </svg>
                <ProfitTitle>净利润(千万)</ProfitTitle>
              </ProfitPlot>
              <Years><span>2020</span><span>2021</span><span>2022</span></Years>
            </Profit>
            <StatTable rows={incomeRows} height={38} line={false} />
            <Expand aria-label="展开"><svg width="5" height="3" viewBox="0 0 5 3" fill="none" stroke="#aaa"><path d="M.5 .5l2 2 2-2" /></svg></Expand>
            {statGroups.map(g => <StatTable key={g.height} {...g} />)}
            <InfoTable $height={30}>
              <colgroup><col width="21" /><col width="37" /><col /></colgroup>
              <tbody>{holders.map(([a, b, c]) => <tr key={a}><Dim>{a}</Dim><Fact>{b}</Fact><Fact>{c}</Fact></tr>)}</tbody>
            </InfoTable>
            <News href="#report" $height={12}>2022年中报于8月23日披露</News>
            <News href="#limit" $alert $height={14}>8月08日14:12涨停:新冠药概念&gt;</News>
            <InfoTable $height={20}>
              <colgroup><col width="21" /><col width="15" /><col width="37" /><col /></colgroup>
              <tbody>
                <tr><Dim>基金<sup>①</sup></Dim><Fact>4家</Fact><Fact>115万股</Fact><Fact>0.5%</Fact></tr>
                <tr><Dim>社保<sup>①</sup></Dim><Fact>1家</Fact><Fact>1088万股</Fact><Fact>4.7%</Fact></tr>
              </tbody>
            </InfoTable>
            <InfoTable $height={14}>
              <colgroup><col width="16" /><col width="29" /><col width="16" /><col /></colgroup>
              <tbody><tr><Dim>分红</Dim><Fact>2.71亿(6)</Fact><Dim>募资</Dim><Fact>3.36亿(1)</Fact></tr></tbody>
            </InfoTable>
            <InfoTable $height={39}>
              <colgroup><col width="16" /><col /></colgroup>
              <tbody>{company.map(([a, b]) => <tr key={a}><Dim>{a}</Dim><Fact $left>{b}</Fact></tr>)}</tbody>
            </InfoTable>
            <InfoTabs $height={14}>
              <span /><InfoTab $active>预测评级</InfoTab><InfoTab>主题投资</InfoTab><InfoTab>选股策略›</InfoTab>
            </InfoTabs>
            <InfoTable $height={39}>
              <colgroup><col width="33" /><col width="30" /><col /></colgroup>
              <thead><tr><Dim>年份</Dim><Dim $right>每股收益</Dim><Dim $right>年度PE</Dim></tr></thead>
              <tbody>{['2022', '2023', '2024'].map(y => <tr key={y}><Fact $left>{y}(预测)</Fact><Fact>--</Fact><Fact>--</Fact></tr>)}</tbody>
            </InfoTable>
            <InfoTable $height={39}>
              <colgroup><col width="38" /><col width="23" /><col /></colgroup>
              <thead><tr><Dim>日期</Dim><Dim $right>评级</Dim><Dim $right>研究机构</Dim></tr></thead>
              <tbody>
                <tr><Fact $left>2021-04-23</Fact><Fact>买入</Fact><Fact>东吴证券</Fact></tr>
                <tr><Fact $left>--</Fact><Fact>--</Fact><Fact>--</Fact></tr>
                <tr><Fact $left>--</Fact><Fact>--</Fact><Fact>--</Fact></tr>
              </tbody>
            </InfoTable>
            <ScrollMark $top={82} $color="#38b8f0" />
            <ScrollMark $top={94} $color="#48d060" />
          </Info>
        </Body>
      </Window>
    </>
  );
}
